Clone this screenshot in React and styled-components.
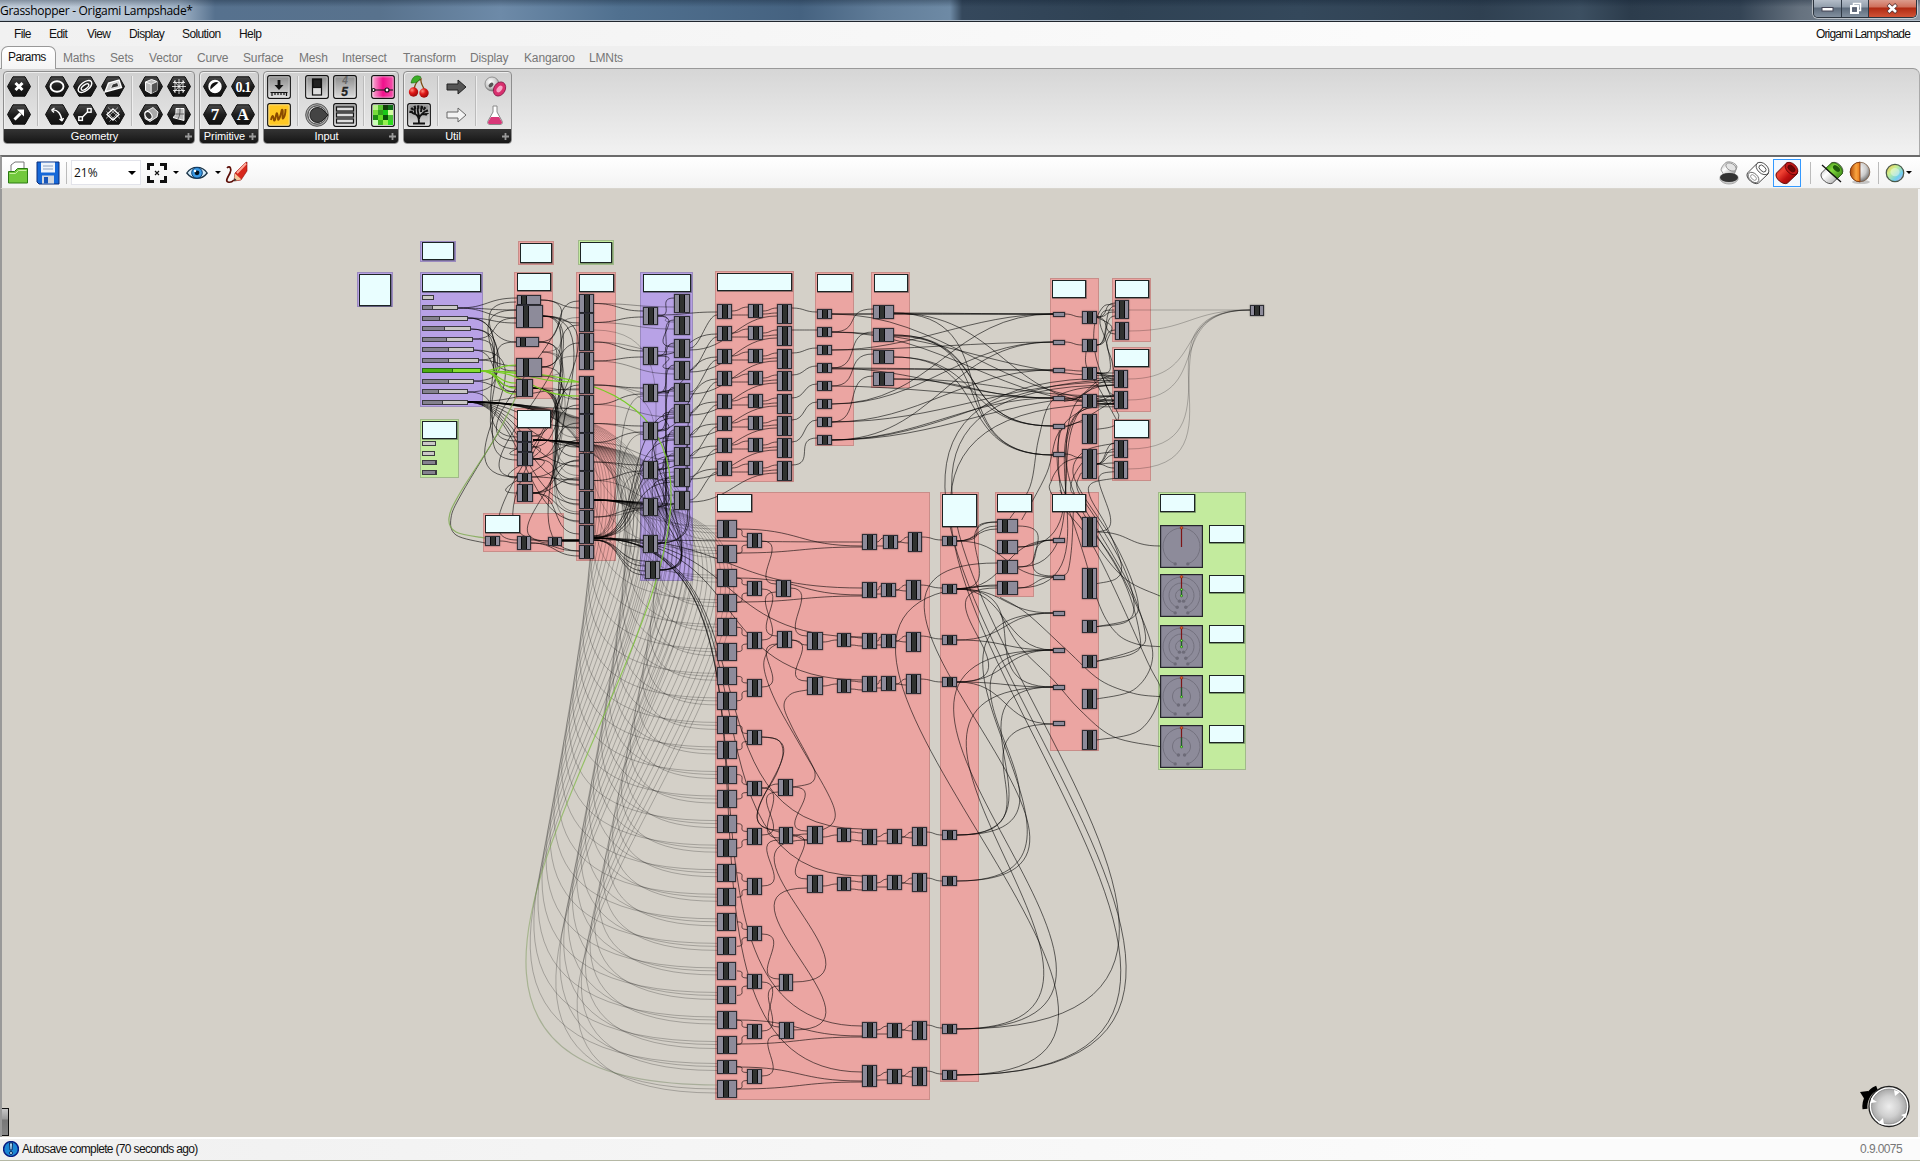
import React from 'react';
import styled, { createGlobalStyle, css } from 'styled-components';

const Global = createGlobalStyle`
  * { box-sizing: border-box; }
  html, body { margin: 0; padding: 0; }
  body { font-family: "Liberation Sans", Arial, sans-serif; font-size: 12px; color: #111; overflow: hidden; }
  svg { display: block; }
`;

const Window = styled.div`
  width: 1920px;
  height: 1161px;
  display: flex;
  flex-direction: column;
  background: #f0f0f0;
  overflow: hidden;
`;

/* ---------- title bar ---------- */
const TitleBar = styled.header`
  height: 22px;
  flex: none;
  display: flex;
  justify-content: space-between;
  padding-right: 3px;
  border-bottom: 1px solid #20262e;
  box-shadow: inset 0 -1px 0 #b4c0cc;
  background:
    linear-gradient(180deg, rgba(15, 30, 48, 0.35), rgba(15, 30, 48, 0) 7px),
    linear-gradient(90deg, #c3cedb 0, #b7c5d4 120px, #9fb2c6 180px, #56718e 215px, #58728d 380px, #6d8aa8 500px, #50708f 620px, #456280 800px, #607c98 880px, #6e8aa5 950px, #35485c 962px, #2f4254 1120px, #34485b 1300px, #2f4051 1480px, #3c4f61 1580px, #2c3c4c 1630px, #344455 1740px, #66727f 1800px, #909ba8 1920px);
`;
const Title = styled.div`
  font: 12px/18px "Open Sans", "Noto Sans", sans-serif;
  letter-spacing: -0.3px;
  padding: 2px 0 0 0;
  color: #000;
  white-space: nowrap;
`;
const Controls = styled.div`
  display: flex;
  width: 104px;
  height: 18px;
  border: 1px solid #2a333d;
  border-top: 0;
  border-radius: 0 0 5px 5px;
  overflow: hidden;
  box-shadow: 0 0 0 1px rgba(255, 255, 255, 0.5);
`;
const Control = styled.div`
  flex: ${(p) => p.$grow};
  display: flex;
  align-items: center;
  justify-content: center;
  border-right: ${(p) => (p.$close ? 0 : '1px solid #2f3945')};
  background: ${(p) =>
    p.$close
      ? 'linear-gradient(#dc9c8c 0, #cf6f5a 7px, #b02a12 8px, #d4573a 18px)'
      : 'linear-gradient(#b4bdc8 0, #929eac 7px, #5d6b7b 8px, #8794a3 18px)'};
`;

/* ---------- menus and tabs ---------- */
const MenuBar = styled.nav`
  height: 24px;
  flex: none;
  display: flex;
  align-items: center;
  padding-left: 14px;
  background: linear-gradient(90deg, #f1f1f1, #f4f4f4 500px, #fcfcfc 1500px);
`;
const MenuItem = styled.span`
  width: ${(p) => p.$w}px;
  letter-spacing: -0.6px;
  white-space: nowrap;
`;
const DocName = styled.span`
  margin-left: auto;
  margin-right: 10px;
  letter-spacing: -0.82px;
`;
const TabStrip = styled.div`
  height: 22px;
  flex: none;
  display: flex;
  align-items: stretch;
  background: #efefef;
`;
const ActiveTab = styled.div`
  width: 55px;
  height: 23px;
  margin: 0 7px 0 1px;
  padding: 3px 0 0 6px;
  border: 1px solid #999;
  border-bottom: 0;
  border-radius: 7px 7px 0 0;
  background: linear-gradient(#fff, #f4f4f4);
  letter-spacing: -0.6px;
  position: relative;
  z-index: 1;
`;
const Tab = styled.div`
  width: ${(p) => p.$w}px;
  padding-top: 5px;
  color: #777;
  letter-spacing: -0.15px;
  white-space: nowrap;
`;
const Ribbon = styled.section`
  height: 87px;
  flex: none;
  display: flex;
  gap: 4px;
  align-items: flex-start;
  padding: 2px 0 0 3px;
  border-top: 1px solid #999;
  border-right: 1px solid #aaa;
  border-radius: 0 7px 0 0;
  background: linear-gradient(#d6d6d6, #f0f0f0 80px);
`;
const Panel = styled.div`
  width: ${(p) => p.$w}px;
  height: 73px;
  display: flex;
  flex-direction: column;
  border: 1px solid #8e8e8e;
  border-radius: 4px;
  overflow: hidden;
  background: linear-gradient(#d0d0d0, #ececec);
  box-shadow: inset 1px 1px 0 #eee;
`;
const PanelBody = styled.div`
  flex: 1;
  display: flex;
  align-items: center;
  padding: 1px 0 0 3px;
`;
const IconGrid = styled.div`
  display: grid;
  grid-template-rows: 24px 24px;
  grid-auto-flow: column;
  grid-auto-columns: 24px;
  gap: 4px;
  align-items: center;
`;
const Divider = styled.i`
  width: 2px;
  height: 50px;
  margin: 0 6px;
  border-left: 1px solid #bbb;
  border-right: 1px solid #eee;
`;
const PanelLabel = styled.div`
  height: 14px;
  flex: none;
  display: flex;
  align-items: center;
  background: linear-gradient(#343434, #161616);
  color: #fff;
  font-size: 11px;
  letter-spacing: -0.1px;
`;
const LabelText = styled.span`
  flex: 1;
  text-align: center;
  padding-left: 2px;
`;
const PlusMark = styled.svg`
  width: 7px;
  height: 7px;
  margin: 0 2px 0 2px;
`;

/* ---------- canvas toolbar ---------- */
const ToolBar = styled.div`
  height: 34px;
  flex: none;
  display: flex;
  align-items: center;
  padding: 0 8px 0 5px;
  border-top: 2px solid #6b6b6b;
  border-left: 2px solid #999;
  border-bottom: 1px solid #d8d5ce;
  background: linear-gradient(#fff, #f3f3f3);
`;
const Tool = styled.div`
  width: ${(p) => p.$w ?? 24}px;
  margin-right: ${(p) => p.$gap ?? 0}px;
  height: 28px;
  display: flex;
  align-items: center;
  justify-content: center;
  ${(p) => p.$on && css`border: 1px solid #3399ff; background: #f4f8fd;`}
`;
const Zoom = styled.div`
  width: 70px;
  height: 25px;
  display: flex;
  align-items: center;
  justify-content: space-between;
  padding: 0 4px 0 2px;
  margin: 0 3px 0 4px;
  border: 1px solid #e2e3ea;
  background: #fff;
  font: 12px "Open Sans", sans-serif;
`;
const Caret = styled.i`
  width: 0;
  height: 0;
  border: ${(p) => p.$s ?? 3}px solid transparent;
  border-top-color: #000;
  border-bottom: 0;
  margin-right: ${(p) => p.$gap ?? 0}px;
`;
const Sep = styled.i`
  width: 1px;
  height: 22px;
  background: #bbb;
  margin-right: ${(p) => p.$gap ?? 0}px;
`;
const Spacer = styled.span`flex: 1;`;

/* ---------- canvas ---------- */
const Canvas = styled.main`
  flex: 1;
  position: relative;
  overflow: hidden;
  background: #d4d0c8;
  border-left: 2px solid #999;
  border-right: 2px solid #f4f4f4;
`;
const World = styled.div`
  position: absolute;
  left: -2px;
  top: -189px;
  width: 1920px;
  height: 1161px;
`;
const WireLayer = styled.svg`
  position: absolute;
  left: 0;
  top: 0;
  fill: none;
`;
const place = css`
  position: absolute;
  left: ${(p) => p.$x}px;
  top: ${(p) => p.$y}px;
  width: ${(p) => p.$w}px;
  height: ${(p) => p.$h}px;
`;
const tones = {
  red: ['#eba5a2', '#c98d89'],
  purple: ['#b8a2e6', '#9a8abf'],
  green: ['#c3eb9e', '#a0b98a'],
};
const Group = styled.div`
  ${place}
  background: ${(p) => tones[p.$tone][0]};
  border: 1px solid ${(p) => tones[p.$tone][1]};
`;
const Note = styled.div`
  ${place}
  background: #e9feff;
  border: 1px solid #1c2424;
  box-shadow: 0.5px 0.5px 0 0.3px rgba(20, 30, 30, 0.5);
`;
const Node = styled.div`
  ${place}
  background: #8d8b9a;
  border: 1px solid #2e2e35;
  box-shadow: 0 0 1px 0.3px rgba(0, 0, 0, 0.45);
`;
const Stripe = styled.i`
  display: block;
  height: 100%;
  width: 6px;
  margin-left: ${(p) => p.$at}px;
  background: #303230;
  border: solid #08080a;
  border-width: 0 1px;
`;
const Slider = styled.div`
  ${place}
  display: flex;
  border: 1px solid ${(p) => (p.$hot ? '#246414' : '#3c3b40')};
  background: ${(p) => (p.$hot ? '#86dd31' : '#cac8c6')};
`;
const Fill = styled.i`
  width: ${(p) => p.$w}px;
  background: ${(p) => (p.$hot ? '#4eae12' : '#85828f')};
  border-right: 1px solid ${(p) => (p.$hot ? '#246414' : '#3c3b40')};
`;
const Dial = styled.svg`
  ${place}
`;
const Compass = styled.svg`
  position: absolute;
  left: 1858px;
  top: 1084px;
`;
const DockHandle = styled.div`
  ${place}
  border: 1px solid #111;
  border-left: 0;
  background: linear-gradient(#c8c8c8 0, #999 10px, #777 11px, #868686 27px);
`;

const StatusBar = styled.footer`
  height: 24px;
  flex: none;
  display: flex;
  align-items: center;
  gap: 3px;
  padding: 0 18px 1px 3px;
  border-top: 2px solid #fff;
  border-bottom: 1px solid #b5b8a4;
  background: linear-gradient(90deg, #f0f0f0, #fbfbfb 1500px);
`;
const StatusText = styled.span`letter-spacing: -0.66px;`;
const Version = styled.span`
  margin-left: auto;
  color: #777;
  letter-spacing: -0.6px;
`;

/* ================= data ================= */
const groups = [
  ['purple', 357, 272, 36, 35], ['purple', 420, 241, 36, 21], ['red', 518, 241, 36, 24], ['green', 578, 240, 36, 25],
  ['purple', 420, 272, 63, 135], ['red', 514, 272, 39, 127], ['red', 576, 272, 40, 289], ['purple', 640, 272, 53, 309],
  ['green', 420, 419, 39, 59], ['red', 514, 408, 39, 96], ['red', 483, 513, 81, 39],
  ['red', 715, 271, 79, 211], ['red', 815, 272, 39, 174], ['red', 871, 272, 39, 116], ['red', 1050, 278, 49, 203],
  ['red', 1112, 278, 39, 64], ['red', 1112, 347, 39, 65], ['red', 1112, 419, 39, 62],
  ['red', 1050, 492, 49, 259], ['green', 1158, 492, 88, 278], ['red', 715, 492, 215, 608], ['red', 940, 492, 39, 590], ['red', 995, 492, 39, 105],
];
const notes = [
  [359, 274, 32, 32], [422, 242, 32, 18], [520, 243, 32, 20], [580, 242, 32, 21], [422, 274, 59, 18], [517, 273, 34, 18],
  [579, 274, 35, 18], [643, 274, 48, 18], [422, 421, 35, 18], [517, 410, 34, 18], [485, 515, 35, 18],
  [717, 273, 75, 18], [817, 274, 35, 18], [874, 274, 34, 18], [1052, 280, 34, 18], [1115, 280, 34, 18], [1114, 349, 35, 18], [1114, 420, 35, 18],
  [1052, 494, 34, 18], [1160, 494, 35, 18], [717, 494, 35, 18], [942, 494, 35, 33], [997, 494, 35, 18],
  ...[525, 575, 625, 675, 725].map((y) => [1209, y, 35, 18]),
];
const col = (x, w, list, h, at) => list.map((e) => (Array.isArray(e) ? [x, e[0], w, e[1], at] : [x, e, w, h, at]));
const rowY = Array.from({ length: 24 }, (_, i) => (i < 22 ? 529 + i * 24.55 : i === 22 ? 1066.5 : 1089));
const subY = [541, 589, 640, 687, 737.5, 788.5, 835.5, 885.5, 933.5, 982, 1031.5, 1076.5];
const colC = [[294, 19], [313, 19], [333, 18], [352, 18], [376, 18], [395, 19], [414, 19], [433, 19], [453, 18], [471, 19], [491, 18], [510, 14], [525, 19], [545, 14]];
const colD = [307, 347, 384, 422, 461, 498, 535];
const colE = [294, 316, 339, 361, 383, 404, 426, 447, 468, 491];
const rowU = [304, 326, 349, 371, 394, 416, 438, 461];
const col8 = [309, 327, 345, 363, 381, 399, 417, 435];
const nodes = [
  [517, 295, 24, 10, 3], [516, 305, 27, 23, 6], [516, 337, 23, 10, 3], [516, 358, 26, 19, 6], [516, 379, 17, 18, 5],
  [517, 431, 15, 11], [517, 442, 15, 10], [517, 452, 16, 14], [517, 473, 15, 9], [517, 484, 16, 18],
  [485, 536, 15, 10], [517, 536, 14, 14], [548, 537, 14, 9],
  ...col(579, 15, colC), ...col(643, 15, colD, 18), [645, 561, 15, 18],
  ...col(674, 16, colE, 19),
  ...col(717, 15, rowU, 15), ...col(748, 15, rowU, 14), ...col(777, 15, rowU, 20),
  ...col(817, 15, col8, 10), ...col(873, 21, [305, 328, 350, 372], 14, 5),
  ...col(1082, 15, [[311, 13], [339, 13], [367, 13], [394, 14], [414, 30], [449, 30], [517, 30], [568, 31], [620, 13], [655, 13], [689, 20], [730, 20]]),
  [1115, 300, 14, 19], [1115, 322, 14, 18], ...col(1114, 14, [370, 391, 440, 461], 18), [1250, 305, 14, 11],
  ...col(997, 21, [519, 540, 560, 581], 14, 4),
  ...rowY.map((y, i) => [717, Math.round(y) - (i === 22 ? 7 : 9), i > 13 && i < 20 ? 19 : 20, i === 22 ? 14 : 18, 5]),
  ...subY.map((y, i) => [747, Math.round(y - 7.8), 15, [15, 15, 17, 18, 15, 15, 17, 17, 15, 15, 15, 15][i]]),
  [776, 580, 15, 17], [777, 631, 15, 17], [778, 779, 15, 17], [779, 827, 14, 17], [779, 974, 14, 17], [779, 1022, 15, 17],
  ...col(807, 16, [632, 677, 826, 875], 18), ...col(837, 14, [633, 679, 828, 877], 14),
  ...col(862, 15, [534, 582, 633, 676, 829, 875, 1022, [1065, 22]], 16),
  [883, 535, 15, 14], [881, 583, 15, 14], [881, 634, 15, 14], [881, 676, 15, 15], ...col(887, 15, [829, 875, 1023, 1069], 15),
  [908, 532, 14, 20], ...col(906, 15, [580, 632, 674], 20), ...col(912, 15, [827, 873, 1021, 1067], 19),
  ...col(942, 15, [536, 584, 635, 677, 830, 876, 1024, 1070], 10),
];
const chips = [312, 340, 368, 396, 424, 452, 538, 575, 611, 648, 685, 721];
const sliders = [
  [295, 12, 0], [305, 36, 10], [316, 46, 17], [326, 49, 22], [337, 51, 24], [347, 52, 26], [358, 57, 26], [368, 59, 30, true], [379, 52, 26], [389, 46, 16], [400, 46, 20],
  [441, 14, 0], [451, 13, 0], [460, 15, 15], [470, 15, 15],
];

/* ================= wires ================= */
const reach = (dx, dy) => {
  const ax = Math.abs(dx);
  const ay = Math.abs(dy);
  if (dx > ay * 1.1) return ax * 0.5 + ay * 0.08;
  return ax * 0.4 + ay * 0.5;
};
const curve = ([x1, y1, x2, y2, d]) => {
  const r = d ?? reach(x2 - x1, y2 - y1);
  return `M${x1} ${y1}C${x1 + r} ${y1} ${x2 - r} ${y2} ${x2} ${y2}`;
};
const through = (pts) => {
  let s = `M${pts[0][0]} ${pts[0][1]}`;
  for (let i = 0; i < pts.length - 1; i++) {
    const a = pts[i - 1] ?? pts[i];
    const b = pts[i];
    const c = pts[i + 1];
    const e = pts[i + 2] ?? c;
    s += `C${b[0] + (c[0] - a[0]) / 6} ${b[1] + (c[1] - a[1]) / 6} ${c[0] - (e[0] - b[0]) / 6} ${c[1] - (e[1] - b[1]) / 6} ${c[0]} ${c[1]}`;
  }
  return s;
};

const w = [];
const add = (...a) => w.push(a);
const soft = [];

/* evaluation rows, lower block */
subY.forEach((y, i) => {
  add(737, rowY[2 * i], 747, y - 4, 11);
  add(737, rowY[2 * i + 1], 747, y + 4, 11);
});
[
  [762, 541, 776, 584, 28], [762, 589, 777, 636, 30], [762, 640, 776, 592, 30], [762, 687, 777, 644, 30],
  [790, 588, 807, 636, 32], [791, 640, 807, 681, 32], [791, 640, 807, 645], [762, 737, 779, 830, 68], [762, 788, 778, 784], [762, 788, 779, 838, 32], [762, 835, 778, 792, 32],
  [793, 787, 807, 831, 36], [793, 835, 807, 879, 34], [793, 835, 807, 834], [793, 836, 807, 840], [762, 886, 779, 840, 34],
  [762, 934, 779, 979, 32], [762, 982, 779, 1027, 28], [762, 1031, 779, 986, 28], [762, 1076, 779, 1035, 30],
  [793, 982, 807, 840, 108], [793, 1030, 807, 888, 108],
].forEach((a) => add(...a));
[[541, 529, 553], [590, 578, 602], [1031, 1020, 1044], [1076, 1067, 1089]].forEach(([y, a, b]) => {
  add(737, a, 862, y + 5);
  add(737, b, 862, y + 6);
});
[640, 684, 835, 884].forEach((y) => {
  add(823, y + 2, 837, y);
  add(851, y - 3, 862, y - 2);
  add(851, y + 5, 862, y + 6);
});
[[542, 883, 908], [590, 881, 906], [641, 881, 906], [684, 881, 906], [837, 887, 912], [883, 887, 912], [1030, 887, 912], [1076, 887, 912]].forEach(([y, b, c]) => {
  add(877, y, b, y - 4);
  add(877, y + 4, b, y + 4);
  add(b + 15, y, c, y - 5);
  add(b + 15, y, c, y + 1);
  add(c + 14, y - 5, 942, y - 2);
});
add(594, 540, 862, 542);
[[588, 140], [637, 150], [680, 160], [829, 190], [876, 200], [1026, 232], [1072, 240]].forEach(([y, d]) => add(594, 538, 862, y, d));

/* upper block */
rowU.forEach((y, i) => {
  add(732, y + 7, 748, y + 3);
  add(732, y + 11, 748, y + 11);
  add(763, y + 7, 777, y + 4);
  add(763, y + 10, 777, y + 9);
  add(792, y + 4, 817, col8[i] + 3);
  const e = colE[i + 2] + 9;
  add(690, e, 717, y + 11, 10);
  add(690, e + 2, 777, y + 12, 40);
  add(658, (colD[Math.min(i, 6)]) + 8, 717, y + 8);
});
[[332, 309], [368, 332], [386, 354], [422, 376]].forEach(([a, b]) => add(832, a, 873, b, 30));
const chipIn = [
  [314, [[832, 314], [832, 314], [893, 313], [832, 350], [832, 404]]],
  [342, [[832, 350], [832, 404], [832, 440]]],
  [370, [[832, 368], [832, 369], [832, 422]]],
  [398, [[832, 368], [832, 386], [893, 379], [832, 440]]],
  [426, [[893, 335], [893, 357], [893, 336]]],
  [455, [[893, 313], [893, 335], [893, 357]]],
];
chipIn.forEach(([y, list]) => list.forEach(([a, b]) => add(a, b, 1053, y, 70 + Math.abs(b - y) * 0.35)));
[[832, 314, 400], [832, 332, 404], [832, 332, 376], [893, 313, 404], [832, 422, 382], [832, 440, 396], [832, 440, 380], [893, 379, 396]].forEach(([a, b, c]) => add(a, b, 1114, c, 110));
[0, 1, 2, 3, 4, 5].forEach((i) => add(1065, chips[i] + 2, 1082, [317, 345, 371, 400, 422, 458][i]));
[6, 7, 8, 9, 10, 11].forEach((i) => add(1065, chips[i] + 2, 1082, [525, 576, 626, 661, 694, 735][i], 10));

/* lower distributor */
[
  [957, 541, 997, 526], [957, 541, 997, 529], [957, 541, 997, 522, 40], [957, 541, 1053, 577], [957, 589, 1053, 540], [957, 589, 997, 522, 55],
  [957, 589, 997, 585], [957, 589, 1053, 613], [957, 589, 1053, 650, 50], [957, 589, 1053, 687], [957, 640, 1053, 613], [957, 640, 1053, 650],
  [957, 682, 1053, 650], [957, 682, 1053, 687], [957, 682, 1053, 724], [957, 682, 997, 588, 90],
  [957, 835, 1053, 724, 112], [957, 835, 1053, 687, 122], [957, 835, 1053, 650, 167], [957, 881, 1053, 613, 195], [957, 881, 997, 563, 235],
  [957, 1029, 1053, 687, 255], [957, 1029, 1053, 650, 300], [957, 1075, 997, 586, 335],
  [957, 1029, 1114, 385, 490], [957, 1075, 1114, 404, 495], [957, 1075, 1114, 378, 514],
  [1018, 526, 1053, 576, 50], [1018, 547, 1053, 540], [1018, 567, 1053, 540, 30], [1018, 588, 1053, 577],
  [1018, 567, 1114, 396, 90], [1018, 588, 1114, 400, 110], [1018, 547, 1114, 385, 95], [1097, 532, 1160, 546],
].forEach((a) => add(...a));

/* outputs of the upper sorter */
[[317, 303], [317, 312], [317, 334], [345, 306], [345, 316], [345, 330]].forEach(([a, b]) => add(1097, a, 1115, b, 13));
[373, 376, 379, 383].forEach((t) => add(1097, 373, 1114, t, 8));
[[401, 396], [401, 401], [401, 404], [373, 395]].forEach(([a, b]) => add(1097, a, 1114, b, 8));
[[401, 376], [401, 380]].forEach(([a, b]) => add(1064, a, 1114, b, 24));
[443, 449, 455, 463, 468].forEach((t) => add(1097, 464, 1114, t, 9));

const local = (pts) => pts.map(([x, y]) => [1000 + x / 3, 260 + y / 3]);
const traced = [
  local([[178, 510], [175, 570], [185, 700], [240, 770], [300, 870], [380, 960], [480, 1008]]),
  local([[180, 690], [210, 760], [250, 880], [300, 1040], [350, 1120], [410, 1152], [480, 1160]]),
  local([[0, 1012], [80, 1060], [200, 1170], [300, 1260], [400, 1300], [480, 1310]]),
  local([[0, 1060], [60, 1160], [160, 1260], [240, 1350], [340, 1430], [480, 1460]]),
  local([[290, 816], [325, 805], [330, 765], [298, 670], [305, 642], [343, 635]]),
  local([[290, 971], [350, 955], [363, 910], [320, 800], [270, 710], [275, 670], [343, 655]]),
  local([[290, 1100], [380, 1085], [402, 1030], [370, 920], [290, 780], [233, 690], [240, 645], [247, 640]]),
  local([[290, 1100], [395, 1075], [412, 1015], [350, 860], [240, 690], [220, 620], [260, 570], [343, 550]]),
  local([[290, 1204], [400, 1180], [420, 1130], [370, 960], [240, 740], [198, 600], [215, 490], [260, 445], [343, 430]]),
  local([[290, 1204], [415, 1165], [434, 1110], [380, 960], [250, 740], [212, 680], [260, 595], [343, 575]]),
  local([[290, 1317], [400, 1290], [455, 1210], [440, 1110], [340, 900], [190, 690], [180, 520], [250, 450], [343, 440]]),
  local([[290, 1440], [420, 1410], [480, 1300], [440, 1200], [280, 860], [160, 710], [155, 660], [190, 610], [247, 590]]),
  local([[65, 780], [140, 640], [175, 520], [247, 480], [343, 420]]),
  local([[30, 775], [90, 680], [115, 540], [150, 430], [220, 390], [343, 375]]),
  local([[290, 508], [340, 498], [356, 470], [345, 440], [290, 300], [283, 200], [310, 140], [343, 135]]),
  local([[290, 340], [330, 330], [320, 250], [300, 190], [310, 155], [343, 150]]),
  local([[258, 275], [260, 320], [300, 390], [350, 480]]),
  local([[290, 172], [335, 200], [320, 250], [335, 300], [343, 340]]),
  local([[220, 755], [215, 860], [205, 930], [193, 945]]),
  /* long returns between the middle evaluation rows */
  [[777, 644], [768, 651], [764, 668], [775, 700], [800, 745], [826, 790], [835, 812], [832, 824], [822, 830]],
  [[807, 690], [791, 694], [784, 706], [792, 727], [808, 757], [815, 773], [811, 783], [793, 787]],
  [[762, 737], [778, 740], [783, 753], [776, 775], [763, 797], [757, 815], [762, 826], [779, 832]],
];

/* left side: sliders to first stage, first stage to second */
[
  [458, 308, 517, 298], [458, 308, 516, 310], [458, 308, 516, 318], [468, 318, 516, 342], [468, 318, 516, 323], [468, 318, 517, 437, 62],
  [471, 329, 516, 387, 45], [471, 329, 517, 449, 66], [473, 339, 516, 318, 30], [473, 339, 516, 371, 40], [473, 350, 516, 392, 30], [473, 350, 517, 477, 90],
  [479, 360, 516, 342, 30], [479, 360, 516, 366], [473, 381, 516, 392, 20], [473, 381, 516, 302, 70], [468, 392, 517, 460, 50], [468, 392, 516, 310, 70],
  [541, 300, 579, 308], [543, 316, 579, 323], [543, 316, 579, 399, 40], [543, 316, 579, 418, 50], [539, 342, 579, 301, 30], [539, 342, 579, 457, 60], [542, 367, 579, 325, 30], [542, 367, 579, 343],
  [533, 388, 579, 480, 60], [533, 388, 579, 500, 60], [532, 436, 517, 455, 30], [532, 436, 579, 385, 30], [532, 447, 579, 405, 30], [532, 447, 517, 478, 35], [533, 459, 579, 423, 30], [533, 459, 579, 443, 20], [533, 459, 517, 493, 45],
  [532, 477, 579, 480], [532, 477, 579, 461], [533, 493, 579, 478], [533, 493, 579, 460], [533, 493, 579, 440, 30], [533, 493, 579, 514], [533, 493, 579, 534, 30],
  [533, 459, 548, 541, 65], [543, 316, 548, 541, 120], [500, 541, 517, 543], [531, 540, 548, 543], [531, 543, 579, 551], [531, 543, 579, 556],
  [541, 300, 517, 441, 80], [539, 342, 517, 477, 70], [542, 367, 517, 540, 75], [543, 316, 579, 551, 90],
].forEach((a) => add(...a));
colC.forEach(([y, h], i) => {
  const c = y + h / 2;
  if (i > 3 && i < 12) add(467, 402, 579, c + 4, 56);
  if (i % 2 && i < 12) soft.push([542, 340 + (i % 4) * 12, 579, c - 5, 38 + i * 2]);
  if (i > 3 && i < 12) soft.push([533, 388, 579, c + 5, 34 + i * 2]);
  const d = colD[Math.min(6, Math.floor(i / 2))] + 9;
  if (i < 12) add(594, c, 643, d - 5 + (i % 2) * 6);
  if (i < 12) soft.push([594, c, 674, colE[Math.min(9, i)] + 13, 40]);
});
colD.forEach((y, i) => {
  if (i > 1) soft.push([594, 536, 643, y + 12, 34]);
  if (i > 2) add(594, 538, 674, colE[i + 2] + 14, 52);
  if (i > 3) soft.push([594, 537, 674, colE[i + 3] + 4, 58]);
  add(658, y + 9, 674, colE[i] + 4, 18);
  soft.push([658, y + 9, 674, colE[i + 1] + 6, 20]);
  add(658, y + 9, 674, colE[i + 2] + 8, 30);
});
[561, 566, 571, 575].forEach((y) => add(594, 540, 645, y));
[478, 456, 436, 414].forEach((y) => add(660, 570, 674, y, 70));

/* faint long fan into the lower rows */
const faint = [];
rowY.forEach((y, i) => {
  const dy = (s) => y - s;
  if (i < 23) faint.push([467, 402, 717, y - 3, 110 + dy(402) * 0.62]);
  faint.push([533, 440, 717, y, 55 + dy(440) * 0.64]);
  faint.push([594, 500, 717, y + 4, 40 + dy(500) * 0.66]);
});
[[1129, 310, 60], [1129, 331, 60], [1128, 379, 80], [1128, 400, 90], [1128, 449, 118], [1128, 469, 130]].forEach(([x, y, d]) => faint.push([x, y, 1250, 310, d]));
[[594, 330], [594, 385]].forEach(([x, y], i) => faint.push([x, y, 717, 540 + i * 8, 130]));

const loops = [[500, 430], [462, 493], [451, 518], [456, 535], [485, 543]];
const loopGreen = [[517, 395], [495, 438], [460, 493], [449, 518], [456, 532], [485, 538]];
const hotWires = [[480, 371, 516, 383], [480, 371, 516, 388], [480, 371, 516, 365], [480, 371, 516, 394, 24], [480, 371, 579, 382], [480, 371, 579, 396]];

/* ================= drawings ================= */
const HEX = '0.5,10.5 6,0.8 18,0.8 23.5,10.5 18,20.2 6,20.2';
const Hex = ({ children }) => (
  <svg width="24" height="22" viewBox="0 0 24 22" fill="none" stroke="#fff" strokeWidth="1.4">
    <polygon points={HEX} fill="url(#hexFill)" stroke="#0c0c0c" strokeWidth="1" />
    {children}
  </svg>
);
const Tile = ({ fill = 'url(#tileFill)', children }) => (
  <svg width="24" height="24" viewBox="0 0 24 24" fill="none" stroke="#111" strokeWidth="1.2">
    <rect x="0.7" y="0.7" width="22.6" height="22.6" rx="2" fill={fill} stroke="#111" />
    <rect x="1.8" y="1.8" width="20.4" height="20.4" rx="1" stroke="#fff" strokeOpacity="0.6" strokeWidth="0.8" />
    {children}
  </svg>
);
const Letter = ({ children, size }) => (
  <text x="12" y={size > 14 ? 16.3 : 15.5} textAnchor="middle" fontFamily="Liberation Serif, serif" fontWeight="700" fontSize={size} fill="#fff" stroke="none" letterSpacing={size > 14 ? 0 : -0.8}>{children}</text>
);
const Plain = ({ children, s = 24 }) => <svg width={s} height={s} viewBox="0 0 24 24" fill="none">{children}</svg>;

const Defs = () => (
  <svg width="0" height="0" style={{ position: 'absolute' }}>
    <defs>
      <linearGradient id="hexFill" x1="0" y1="0" x2="0" y2="1"><stop offset="0" stopColor="#4a4a4a" /><stop offset="0.5" stopColor="#1d1d1d" /><stop offset="1" stopColor="#111" /></linearGradient>
      <linearGradient id="tileFill" x1="0" y1="0" x2="0" y2="1"><stop offset="0" stopColor="#8a8a8a" /><stop offset="1" stopColor="#dedede" /></linearGradient>
      <linearGradient id="pinkFill"><stop offset="0" stopColor="#f8b8d8" /><stop offset="0.5" stopColor="#f0108c" /><stop offset="1" stopColor="#f45aad" /></linearGradient>
      <radialGradient id="ball" cx="0.4" cy="0.35" r="0.7"><stop offset="0" stopColor="#fff" /><stop offset="0.6" stopColor="#ccc" /><stop offset="1" stopColor="#666" /></radialGradient>
      <radialGradient id="cherry" cx="0.35" cy="0.3" r="0.8"><stop offset="0" stopColor="#ff8a7a" /><stop offset="0.4" stopColor="#e01818" /><stop offset="1" stopColor="#8c0505" /></radialGradient>
      <linearGradient id="rainbow" x1="0" y1="0" x2="1" y2="1"><stop offset="0" stopColor="#ffb840" /><stop offset="0.35" stopColor="#c8f090" /><stop offset="0.7" stopColor="#70d0f0" /><stop offset="1" stopColor="#e0a0f0" /></linearGradient>
      <linearGradient id="redCyl" x1="0" y1="0" x2="1" y2="1"><stop offset="0" stopColor="#b01010" /><stop offset="0.35" stopColor="#f04434" /><stop offset="0.6" stopColor="#c01010" /><stop offset="1" stopColor="#700" /></linearGradient>
      <linearGradient id="greenCyl" x1="0" y1="0" x2="1" y2="1"><stop offset="0" stopColor="#2c7a0c" /><stop offset="0.4" stopColor="#86dc40" /><stop offset="1" stopColor="#2c7a0c" /></linearGradient>
      <linearGradient id="greyCyl" x1="0" y1="0" x2="1" y2="1"><stop offset="0" stopColor="#a8a8a8" /><stop offset="0.4" stopColor="#fff" /><stop offset="1" stopColor="#8c8c8c" /></linearGradient>
      <linearGradient id="orangeHalf" x1="0" y1="0" x2="1" y2="0"><stop offset="0" stopColor="#b04a08" /><stop offset="0.6" stopColor="#f8a440" /><stop offset="1" stopColor="#e87818" /></linearGradient>
      <radialGradient id="dialFace"><stop offset="0" stopColor="#ededed" /><stop offset="0.6" stopColor="#cfcfcf" /><stop offset="1" stopColor="#a8a8a8" /></radialGradient>
      <linearGradient id="fade" gradientUnits="userSpaceOnUse" x1="0" y1="371" x2="0" y2="1085"><stop offset="0" stopColor="#76cc22" /><stop offset="0.5" stopColor="#7fc040" stopOpacity="0.8" /><stop offset="0.75" stopColor="#7aa050" stopOpacity="0.5" /><stop offset="1" stopColor="#667a55" stopOpacity="0.4" /></linearGradient>
    </defs>
  </svg>
);

const geometryA = [
  <Hex key="x"><path d="M8.5 7l7 7M15.5 7l-7 7" strokeWidth="3" /></Hex>,
  <Hex key="v"><path d="M7.5 15.5l6-6" strokeWidth="3" /><path d="M10 5.5h7v7z" fill="#fff" stroke="none" /></Hex>,
];
const geometryB = [
  <Hex key="c"><ellipse cx="12" cy="10.5" rx="6.5" ry="5.2" strokeWidth="1.9" /></Hex>,
  <Hex key="arc"><path d="M6.5 6C13 5 16 10 17 17M6.5 6l3-1.8M6.5 6l2.5 2.5M17 17l-2.5-2M17 17l1.5-3" /></Hex>,
  <Hex key="curve"><ellipse cx="12" cy="10.5" rx="8" ry="4.2" transform="rotate(-38 12 10.5)" /><ellipse cx="12" cy="11" rx="4.5" ry="2" transform="rotate(-38 12 11)" /></Hex>,
  <Hex key="line"><path d="M8 14.5l8-8" /><rect x="5.8" y="12.8" width="3.6" height="3.6" fill="#222" /><rect x="14.5" y="4.6" width="3.6" height="3.6" fill="#222" /></Hex>,
  <Hex key="plane"><path d="M4 16L7.5 7 18 4l2.5 7.5z" fill="#ccc" /><path d="M9.5 12.5L11.5 8l5-1.5 1.2 4z" fill="#333" strokeWidth="0.8" /></Hex>,
  <Hex key="rect"><path d="M12 5l6 5.5-6 5.5-6-5.5z" strokeWidth="1.3" /><path d="M7 3.5l12 11M17 3.5L5 14.5M5.5 7.5l10 10M18.5 7.5l-10 10" strokeWidth="0.8" strokeOpacity="0.7" /></Hex>,
];
const geometryC = [
  <Hex key="box"><path d="M6.5 6l6-2.5 5.5 2v9l-6 3-5.5-3z" fill="#bbb" strokeWidth="1" /><path d="M12.2 8.3l5.8-2.7v9l-5.8 3z" fill="#555" stroke="none" /><path d="M6.5 6l5.7 2.3v9M12.2 8.3l5.8-2.7" strokeWidth="0.9" /></Hex>,
  <Hex key="brep"><path d="M6 8l8-4.5 5 4.5-1 5-7 4.5-5-3z" fill="#aaa" strokeWidth="0.9" /><ellipse cx="9.5" cy="11.5" rx="3" ry="4.3" fill="#333" transform="rotate(-35 9.5 11.5)" strokeWidth="1.1" /></Hex>,
  <Hex key="mesh"><path d="M6 6.5h12M5 10.5h14M6 14.5h12M8 4v13M12 3v15M16 4v13M7 5l10 11M17 5L7 16" strokeWidth="0.8" /></Hex>,
  <Hex key="srf"><path d="M9 4.5h8v12l-11-3c3-2 3-5 3-9z" fill="#bbb" strokeWidth="1" /><path d="M13 4.5c0 4 0 7-2 10.5M8 10h9" stroke="#444" strokeWidth="0.8" /></Hex>,
];
const primitive = [
  <Hex key="bool"><circle cx="12" cy="10.5" r="6" fill="#fff" /><path d="M7.5 13.5A6 6 0 0 1 15.5 6.500z" fill="#111" stroke="none" /></Hex>,
  <Hex key="int"><Letter size={17}>7</Letter></Hex>,
  <Hex key="num"><Letter size={14}>0.1</Letter></Hex>,
  <Hex key="txt"><Letter size={17}>A</Letter></Hex>,
];
const inputA = [
  <Tile key="import"><path d="M12 5v8" strokeWidth="2.8" /><path d="M7.5 10h9L12 15z" fill="#111" stroke="none" /><path d="M3.5 17.5h17M5 17v4M8 17v3M11 17v3M14 17v3M17 17v3M19.5 17v4" /></Tile>,
  <Tile key="graph" fill="#ffc823"><path d="M4 17c1-5 2-5 2.5-2s1 4 2 0 1-7 2-3 0 7 2 3 2-10 3-8-1 11 1 8 2-6 2-9" stroke="#8a4a00" strokeWidth="1.9" /></Tile>,
];
const inputB = [
  <Tile key="toggle"><rect x="7.5" y="4" width="9" height="16" fill="#ddd" /><rect x="8" y="4.5" width="8" height="8" fill="#222" /></Tile>,
  <Plain key="knob"><circle cx="12" cy="12" r="11.3" fill="#aaa" stroke="#555" /><circle cx="12" cy="12" r="9.2" fill="#ccc" stroke="#444" /><path d="M23 12l-6-6a7.5 7.5 0 1 0 0 12z" fill="#444" stroke="#222" /></Plain>,
  <Tile key="digits"><text x="12" y="8.5" fontSize="10" fontWeight="700" fontStyle="italic" fontFamily="Liberation Sans, sans-serif" fill="#666" stroke="none" textAnchor="middle">4</text><text x="11.5" y="21.3" fontSize="12" fontWeight="700" fontStyle="italic" fontFamily="Liberation Sans, sans-serif" fill="#222" stroke="#222" strokeWidth="0.3" textAnchor="middle">5</text></Tile>,
  <Tile key="list"><rect x="3.5" y="4" width="17" height="4" fill="#ddd" /><rect x="3.5" y="10" width="17" height="4" fill="#ddd" /><rect x="3.5" y="16" width="17" height="4" fill="#ddd" /></Tile>,
];
const swatches = ['#b8f08c', '#5ac832', '#123c0a', '#0f6e14', '#78dc3c', '#32a01e', '#18c818', '#d2ffa0', '#1e8c14', '#64dc28', '#0a500a', '#46be32', '#c8ffb4', '#3cb41e', '#96f050', '#2cdc1e'];
const inputC = [
  <Tile key="grad" fill="url(#pinkFill)"><path d="M2 15h20" /><circle cx="2.5" cy="15" r="1.5" fill="#fff" /><circle cx="16" cy="15" r="2" fill="#fff" /></Tile>,
  <Tile key="img">{swatches.map((c, i) => <rect key={i} x={2 + (i % 4) * 5} y={2 + Math.floor(i / 4) * 5} width="5" height="5" fill={c} stroke="none" />)}</Tile>,
];
const utilA = [
  <Plain key="cherry"><path d="M7 14C8 9 11 5 14 4c-1 4 3 9 4 12" stroke="#7a4a10" strokeWidth="1.3" /><path d="M14 2C9-1 5 2 4 8c5 0 8-1 10-6z" fill="#3cae28" stroke="#1d6b12" strokeWidth="0.6" /><circle cx="6.5" cy="17" r="4.7" fill="url(#cherry)" /><circle cx="17" cy="18" r="4.7" fill="url(#cherry)" /></Plain>,
  <Tile key="tree"><path d="M12 21c0-5 0-8-5-11M12 16c0-4 4-5 6-8M12 13c-1-4-2-5-1-8M9 11c-3 0-4-1-5-3M15 11c2 0 4 0 5 1M14 9c0-2 0-4 2-5M8 10c0-3 0-4-1-5M6 20.5h12" strokeWidth="1.8" /><path d="M4 10c0-5 4-6 8-6s8 2 8 7" strokeDasharray="2 1.2" strokeWidth="3.4" /></Tile>,
];
const utilB = [
  <Plain key="r1"><path d="M2 9h11V5l8 7-8 7v-4H2z" fill="#555" stroke="#222" /></Plain>,
  <Plain key="r2"><path d="M2 9h11V5l8 7-8 7v-4H2z" fill="#f4f4f4" stroke="#666" /></Plain>,
];
const utilC = [
  <Plain key="pill"><circle cx="9" cy="9" r="7" fill="url(#ball)" stroke="#777" strokeWidth="0.7" /><ellipse cx="16.5" cy="14" rx="5.7" ry="7.5" transform="rotate(30 16.5 14)" fill="#d8306e" stroke="#7a1240" strokeWidth="0.7" /><ellipse cx="8" cy="10" rx="2.8" ry="1.8" transform="rotate(-40 8 10)" fill="#555" /><ellipse cx="16.5" cy="14" rx="3.8" ry="2.3" transform="rotate(-50 16.5 14)" fill="#f6a6c6" /></Plain>,
  <Plain key="flask"><path d="M10 3h4v6l5 9c1 3 0 3-2 3.5H7c-2-.5-3-.5-2-3.5l5-9z" fill="#fff" stroke="#888" /><path d="M8 14h8l3 5c0 2-1 2-2 2H7c-1 0-2 0-2-2z" fill="#d83878" /></Plain>,
];

const PanelBox = ({ w: width, label, sets }) => (
  <Panel $w={width}>
    <PanelBody>
      {sets.map((s, i) => (
        <React.Fragment key={i}>
          {i > 0 && <Divider />}
          <IconGrid>{s}</IconGrid>
        </React.Fragment>
      ))}
    </PanelBody>
    <PanelLabel>
      <LabelText>{label}</LabelText>
      <PlusMark viewBox="0 0 7 7"><path d="M3.5 0v7M0 3.5h7" stroke="#999" strokeWidth="1.8" /></PlusMark>
    </PanelLabel>
  </Panel>
);

const Cylinder = ({ body, top, hole, stroke = '#333', children }) => (
  <Plain>
    <path d="M1.5 12L11 2.5C14-1 25 8 22 13L12.5 22C8.5 25-1.5 17 1.5 12z" fill={body} stroke={stroke} strokeWidth="0.9" />
    <ellipse cx="16.5" cy="7.5" rx="7.4" ry="4.9" transform="rotate(43 16.5 7.5)" fill={top} stroke={stroke} strokeWidth="0.8" />
    <ellipse cx="16.5" cy="7.5" rx="4.2" ry="2.5" transform="rotate(43 16.5 7.5)" fill={hole} stroke={stroke} strokeWidth="0.8" />
    {children}
  </Plain>
);

const arcPath = (r) => {
  const a = (20 * Math.PI) / 180;
  const x = r * Math.sin(a);
  const y = r * Math.cos(a);
  return `M${21.5 - x} ${21.5 + y}A${r} ${r} 0 1 1 ${21.5 + x} ${21.5 + y}`;
};
const dials = [[525, [18.5]], [574, [18.5, 12.5, 6]], [625, [18.5, 12.5, 6]], [675, [18.5, 9]], [725, [18.5, 9]]];
const DialFace = ({ y, rings }) => (
  <Dial $x={1160} $y={y} $w={43} $h={43} viewBox="0 0 43 43">
    <rect x="0.6" y="0.6" width="41.8" height="41.8" fill="#8d8b9a" stroke="#25252b" strokeWidth="1.2" />
    <g fill="none" stroke="#74727f" strokeWidth="1">
      {rings.map((r) => <path key={r} d={arcPath(r)} />)}
    </g>
    <g fill="#6d6b78">
      {rings.map((r) => [-1, 1].map((s) => <circle key={`${r}${s}`} cx={21.5 + s * r * 0.342} cy={21.5 + r * 0.94} r="1.7" />))}
    </g>
    <path d="M21.5 3v19" stroke="#7d1416" strokeWidth="1.2" />
    {rings.length > 1 && <path d={`M21.5 ${rings.length > 2 ? 15 : 12.5}V22`} stroke="#1d5a2a" strokeWidth="1.2" />}
    <circle cx="21.5" cy="2.8" r="1.3" fill="#e0602a" stroke="#7a1a08" strokeWidth="0.6" />
    {rings.length > 2 && <circle cx="21.5" cy="15.5" r="1.1" fill="#7dff4a" stroke="#135a0c" strokeWidth="0.6" />}
    {rings.length > 1 && <circle cx="21.5" cy="21.8" r="1.1" fill="#7dff4a" stroke="#135a0c" strokeWidth="0.6" />}
  </Dial>
);

const menus = [['File', 35], ['Edit', 38], ['View', 42], ['Display', 53], ['Solution', 57], ['Help', 60]];
const tabs = [['Maths', 47], ['Sets', 39], ['Vector', 48], ['Curve', 46], ['Surface', 56], ['Mesh', 43], ['Intersect', 61], ['Transform', 67], ['Display', 54], ['Kangaroo', 65], ['LMNts', 60]];

export default function App() {
  return (
    <Window>
      <Global />
      <Defs />
      <TitleBar>
        <Title>Grasshopper - Origami Lampshade*</Title>
        <Controls>
          <Control $grow="28"><svg width="13" height="6"><rect x="1" y="1.5" width="11" height="3.5" fill="#fff" stroke="#445" /></svg></Control>
          <Control $grow="27"><svg width="13" height="13" fill="none"><path d="M4.5 3.5v-2h7v7h-2" stroke="#fff" strokeWidth="1.5" /><rect x="2" y="4" width="7" height="7" stroke="#fff" strokeWidth="2" /><rect x="4" y="6" width="3" height="3" stroke="#556" strokeWidth="0.8" /></svg></Control>
          <Control $close $grow="48"><svg width="13" height="11"><path d="M2 1.5l8.5 8M10.5 1.5L2 9.5" stroke="#533" strokeWidth="4" /><path d="M2.5 2l7.5 7M10 2L2.5 9" stroke="#fff" strokeWidth="2.6" /></svg></Control>
        </Controls>
      </TitleBar>
      <MenuBar>
        {menus.map(([t, n]) => <MenuItem key={t} $w={n}>{t}</MenuItem>)}
        <DocName>Origami Lampshade</DocName>
      </MenuBar>
      <TabStrip>
        <ActiveTab>Params</ActiveTab>
        {tabs.map(([t, n]) => <Tab key={t} $w={n}>{t}</Tab>)}
      </TabStrip>
      <Ribbon>
        <PanelBox w={192} label="Geometry" sets={[geometryA, geometryB, geometryC]} />
        <PanelBox w={60} label="Primitive" sets={[primitive]} />
        <PanelBox w={136} label="Input" sets={[inputA, inputB, inputC]} />
        <PanelBox w={109} label="Util" sets={[utilA, utilB, utilC]} />
      </Ribbon>
      <ToolBar>
        <Tool $w={22} $gap={7}>
          <svg width="20" height="23" viewBox="0 0 20 23" fill="none"><path d="M3 12V4l4-3h9v11z" fill="#fff" stroke="#777" /><path d="M.5 10.5h6l3-3h10V22H.5z" fill="#72c83c" stroke="#2a7a12" /><path d="M1.5 12.5h6l3-3h8" stroke="#c8f0a0" /></svg>
        </Tool>
        <Tool $w={24} $gap={6}>
          <Plain><path d="M1 1h22v22H3l-2-2z" fill="#1668d8" stroke="#0a2c78" /><rect x="5" y="1.5" width="14" height="10" fill="#eef3fa" /><path d="M7 5h10M7 8h10" stroke="#8aa0c0" /><rect x="6" y="14.5" width="12" height="8" fill="#d4d8de" /><rect x="8" y="16" width="4" height="6.5" fill="#1a56b8" /></Plain>
        </Tool>
        <Sep />
        <Zoom><span>21%</span><Caret $s={4} /></Zoom>
        <Tool $w={26} $gap={3}>
          <svg width="20" height="20" fill="none" stroke="#111" strokeWidth="3"><path d="M1.5 7V1.5H7M13 1.5h5.5V7M18.5 13v5.5H13M7 18.5H1.5V13" /><path d="M8 8l4 4M12 8l-4 4" strokeWidth="1.2" /></svg>
        </Tool>
        <Caret $gap={6} />
        <Tool $w={24} $gap={6}>
          <svg width="22" height="18" viewBox="0 0 22 18" fill="none"><path d="M.8 9C6 1.500 16 1.500 21.200 9 16 16 6 16 .8 9z" fill="#d4ecfa" stroke="#1a3448" strokeWidth="1.3" /><circle cx="11" cy="8.8" r="5.3" fill="#3a9ae4" stroke="#0a3c70" /><circle cx="11" cy="8.8" r="2.4" fill="#04121f" /><circle cx="9" cy="7" r="1.2" fill="#fff" /></svg>
        </Tool>
        <Caret $gap={4} />
        <Tool $w={24}>
          <Plain><path d="M2 7c3-3 5 1 3 5s-5 8-2 9 5-1 6-2" stroke="#5c0f08" strokeWidth="1.7" /><path d="M9 20l1-8L20 2l2-1v9l-6 9z" fill="#d8281c" stroke="#8a0c06" strokeWidth="0.6" /><path d="M9 20l1-7.5 6.5 6z" fill="#f3c79a" /><path d="M9 20l.4-3 2.4 2.3z" fill="#222" /><path d="M12 12l9-9.5" stroke="#ffa898" strokeWidth="2" /></Plain>
        </Tool>
        <Spacer />
        <Tool $gap={5}><Plain><path d="M4 9c0-2 3-7 6-8 4-1 10 2 10 5l-3 8H7z" fill="url(#greyCyl)" stroke="#888" strokeWidth="0.8" /><ellipse cx="14" cy="6" rx="5.5" ry="3.5" transform="rotate(30 14 6)" fill="#e4e4e4" stroke="#888" strokeWidth="0.8" /><path d="M3 15.5c3-4 15-4 18 0v3c-3 6-15 6-18 0z" fill="#c8c8c8" stroke="#999" strokeWidth="0.8" /><ellipse cx="12" cy="16.5" rx="9" ry="4.5" fill="#333" /></Plain></Tool>
        <Tool $gap={3}><Cylinder body="#fff" top="#fff" hole="#fff"><ellipse cx="7.5" cy="16.5" rx="6.3" ry="4" transform="rotate(43 7.5 16.5)" stroke="#555" strokeWidth="0.8" /><ellipse cx="7.5" cy="16.5" rx="3.5" ry="2" transform="rotate(43 7.5 16.5)" stroke="#777" strokeWidth="0.7" /></Cylinder></Tool>
        <Tool $on $w={28} $gap={9}><Cylinder body="url(#redCyl)" top="#c01818" hole="#6a0606" stroke="#5a0404" /></Tool>
        <Sep $gap={9} />
        <Tool $gap={4}><Cylinder body="url(#greyCyl)" top="#4cae1e" hole="#1f5a0c" stroke="#444"><path d="M5.5 7.5L11 2.5c2-1.5 5-.5 8 2.5s4 6 3 8l-5 5z" fill="url(#greenCyl)" stroke="#2a5a12" strokeWidth="0.7" /><ellipse cx="16.5" cy="7.5" rx="4.2" ry="2.5" transform="rotate(43 16.5 7.5)" fill="#1f5a0c" /><path d="M2 4l19 17" stroke="#111" strokeWidth="1.3" /></Cylinder></Tool>
        <Tool $gap={6}><Plain><ellipse cx="13" cy="21" rx="9" ry="2" fill="#000" fillOpacity="0.2" /><circle cx="12" cy="11" r="9.8" fill="url(#ball)" stroke="#7a5a40" strokeWidth="0.8" /><path d="M12 1.2a9.8 9.8 0 0 0 0 19.6z" fill="url(#orangeHalf)" stroke="#7a3008" strokeWidth="0.8" /></Plain></Tool>
        <Sep $gap={5} />
        <Tool $gap={0} $w={22}><Plain s={22}><circle cx="12" cy="12" r="9.5" fill="url(#rainbow)" stroke="#4a5a4a" strokeWidth="1.4" /><ellipse cx="12" cy="11" rx="5" ry="4.5" fill="#fff" fillOpacity="0.4" /></Plain></Tool>
        <Caret />
      </ToolBar>

      <Canvas>
        <World>
          {groups.map(([t, x, y, gw, gh], i) => <Group key={i} $tone={t} $x={x} $y={y} $w={gw} $h={gh} />)}
          <WireLayer width="1920" height="1161">
            <g stroke="#000" strokeOpacity="0.23">{faint.map((a, i) => <path key={i} d={curve(a)} />)}</g>
            <g stroke="#000" strokeOpacity="0.34">{soft.map((a, i) => <path key={i} d={curve(a)} />)}</g>
            <g stroke="#000" strokeOpacity="0.58">
              {w.map((a, i) => <path key={i} d={curve(a)} />)}
              {traced.map((p, i) => <path key={`t${i}`} d={through(p)} />)}
              <path d={through(loops)} />
            </g>
            <path d="M562 540.5h17" stroke="#000" strokeWidth="2.5" />
            <g stroke="#76cc22" strokeWidth="1.2">
              {hotWires.map((a, i) => <path key={i} d={curve(a)} />)}
              <path d="M480 371C1026 371 171 1085 717 1085" stroke="url(#fade)" />
              <path d={through(loopGreen)} stroke="#7aa84c" strokeOpacity="0.8" />
            </g>
          </WireLayer>
          {sliders.map(([y, sw, f, hot]) => (
            <Slider key={y} $x={422} $y={y} $w={sw} $h={5} $hot={hot}>{f > 0 && <Fill $w={f} $hot={hot} />}</Slider>
          ))}
          {nodes.map(([x, y, nw, nh, at], i) => (
            <Node key={i} $x={x} $y={y} $w={nw} $h={nh}><Stripe $at={at ?? (nw > 14 ? 4 : 3)} /></Node>
          ))}
          {chips.map((y) => <Node key={y} $x={1053} $y={y} $w={12} $h={5} />)}
          {dials.map(([y, rings]) => <DialFace key={y} y={y} rings={rings} />)}
          {notes.map(([x, y, nw, nh], i) => <Note key={i} $x={x} $y={y} $w={nw} $h={nh} />)}
          <DockHandle $x={2} $y={1108} $w={7} $h={28} />
          <Compass width="54" height="46" viewBox="0 0 54 46">
            <path d="M7 25c-1-9 4-18 12-21" stroke="#000" strokeWidth="5" fill="none" />
            <path d="M2 8l8-1 1 7-4 2z" fill="#000" />
            <circle cx="31" cy="22.5" r="20" fill="#fff" stroke="#222" strokeWidth="1.3" />
            <circle cx="31" cy="22.5" r="17.5" fill="url(#dialFace)" stroke="#888" strokeWidth="0.8" />
            <path d="M36 6l6 2-5 4zM13 14l6 4-6 1zM49 29l-6 2 5 3zM20 39l5-5 1 7z" fill="#fff" />
          </Compass>
        </World>
      </Canvas>

      <StatusBar>
        <svg width="16" height="16" viewBox="0 0 16 16"><circle cx="8" cy="8" r="7.4" fill="#1c86d4" stroke="#0b1e82" strokeWidth="1.5" /><path d="M6.5 2h3l-.5 7H7z" fill="#bfeaff" stroke="#06245c" /><circle cx="8" cy="12" r="1.5" fill="#dff" stroke="#06245c" /></svg>
        <StatusText>Autosave complete (70 seconds ago)</StatusText>
        <Version>0.9.0075</Version>
      </StatusBar>
    </Window>
  );
}
